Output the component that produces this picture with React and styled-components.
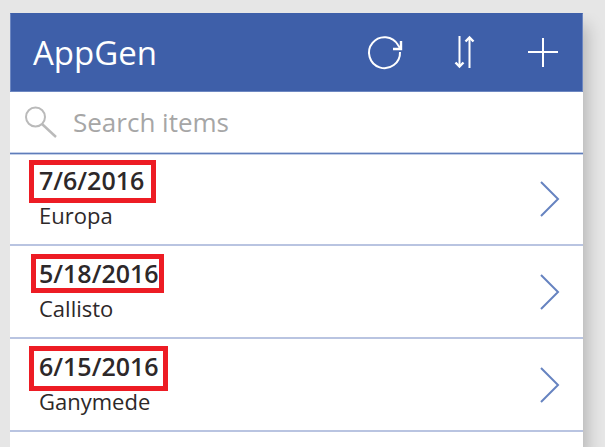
import React from 'react';
import styled, { createGlobalStyle } from 'styled-components';

const GlobalStyle = createGlobalStyle`
  *, *::before, *::after { box-sizing: border-box; }
  body {
    margin: 0;
    background: #e6e6e6;
    color: #2d2829;
    font-family: "Open Sans", "Noto Sans", sans-serif;
  }
`;

const Page = styled.div`
  min-height: 100vh;
  padding: 13px 22px 0 10px;
  display: flex;
  overflow: hidden;
`;

const Card = styled.main`
  flex: 1;
  min-width: 0;
  background: #fff;
  box-shadow: 4px 12px 16px rgba(0, 0, 0, 0.22);
  clip-path: inset(0 -22px 0 0);
`;

const Header = styled.header`
  display: flex;
  align-items: center;
  justify-content: space-between;
  height: 79px;
  padding: 0 19px 0 22px;
  background: #3e5fa9;
  border: 1px solid #6d87c1;
  border-top-color: #3e5fa9;
  color: #fff;
`;

const Title = styled.h1`
  margin: 0;
  font-size: 33px;
  font-weight: 400;
  line-height: 45px;
`;

const Actions = styled.div`
  display: flex;
  gap: 40px;
`;

const IconButton = styled.button`
  display: flex;
  padding: 0;
  border: 0;
  background: none;
  color: inherit;
  cursor: pointer;
`;

const LineIcon = styled.svg`
  display: block;
  flex: none;
  fill: none;
  stroke: currentColor;
  stroke-width: 2;
`;

const SearchBar = styled.label`
  position: relative;
  display: flex;
  align-items: center;
  gap: 14px;
  height: 61px;
  padding: 0 14px 0 15px;
  border-bottom: 1px solid #c3cfe8;
  box-shadow: 0 1px #5f7dba, 0 2px #c3cfe8;
  color: #bababa;
`;

const SearchInput = styled.input`
  flex: 1;
  min-width: 0;
  padding: 0;
  border: 0;
  outline: 0;
  background: none;
  color: #2d2829;
  font: 400 26px/36px "Open Sans", "Noto Sans", sans-serif;

  &::placeholder { color: #a6a6a6; opacity: 1; }
`;

const List = styled.ul`
  margin: 0;
  padding: 0;
  list-style: none;
`;

const Row = styled.li`
  display: flex;
  align-items: center;
  justify-content: space-between;
  height: 93px;
  padding: 0 22px 0 29px;
  border-bottom: 2px solid #b9c4e1;
`;

const DateText = styled.div`
  position: relative;
  width: max-content;
  font-size: 25px;
  font-weight: 600;
  line-height: 36px;
`;

const Highlight = styled.span`
  position: absolute;
  top: ${(p) => p.$top}px;
  left: ${(p) => p.$left}px;
  width: ${(p) => p.$width}px;
  height: ${(p) => p.$height}px;
  border: 5px solid #ed1c24;
  pointer-events: none;
`;

const Name = styled.div`
  font-size: 22px;
  line-height: 34px;
  padding-bottom: 4px;
`;

const OpenButton = styled(IconButton)`
  color: #6683c0;
`;

const items = [
  { date: '7/6/2016', name: 'Europa', box: { $left: -10, $top: -2, $width: 127, $height: 43 } },
  { date: '5/18/2016', name: 'Callisto', box: { $left: -8, $top: -1, $width: 133, $height: 39 } },
  { date: '6/15/2016', name: 'Ganymede', box: { $left: -10, $top: -2, $width: 139, $height: 45 } },
];

export default function App() {
  return (
    <>
      <GlobalStyle />
      <Page>
        <Card>
          <Header>
            <Title>AppGen</Title>
            <Actions>
              <IconButton aria-label="Refresh">
                <LineIcon width="40" height="41" viewBox="0 0 40 41">
                  <path d="M37 20A15.5 15.5 0 1 1 35 13L37.5 17" />
                  <path d="M38 9v8h-8" strokeWidth="2.4" />
                </LineIcon>
              </IconButton>
              <IconButton aria-label="Sort">
                <LineIcon width="40" height="41" viewBox="0 0 40 41">
                  <path d="M16.5 4v30M26.5 36V6" />
                  <path d="M12.5 30.5l4 4 4-4M22.5 9.5l4-4 4 4" strokeWidth="2.4" />
                </LineIcon>
              </IconButton>
              <IconButton aria-label="New item">
                <LineIcon width="40" height="41" viewBox="0 0 40 41">
                  <path d="M5 20h30M20 6v29" />
                </LineIcon>
              </IconButton>
            </Actions>
          </Header>
          <SearchBar>
            <LineIcon width="34" height="34" viewBox="0 0 34 34" aria-hidden="true">
              <circle cx="10.5" cy="12" r="9.5" />
              <path d="M17 19l14 13" strokeWidth="2.4" />
            </LineIcon>
            <SearchInput type="text" aria-label="Search items" placeholder="Search items" />
          </SearchBar>
          <List>
            {items.map((item) => (
              <Row key={item.date}>
                <div>
                  <DateText>
                    {item.date}
                    <Highlight {...item.box} />
                  </DateText>
                  <Name>{item.name}</Name>
                </div>
                <OpenButton aria-label={`Open ${item.name}`}>
                  <LineIcon width="22" height="36" viewBox="0 0 22 36">
                    <path d="M2 1l17 17L2 35" />
                  </LineIcon>
                </OpenButton>
              </Row>
            ))}
          </List>
        </Card>
      </Page>
    </>
  );
}
